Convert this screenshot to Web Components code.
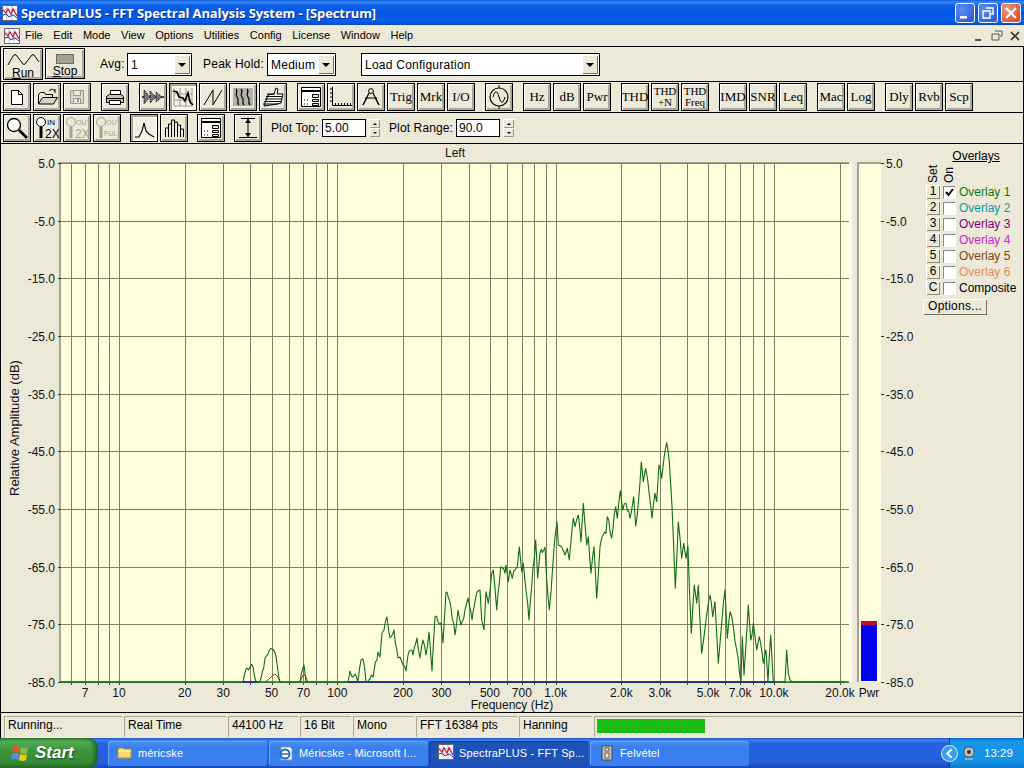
<!DOCTYPE html>
<html>
<head>
<meta charset="utf-8">
<title>SpectraPLUS</title>
<style>
    html, body { margin: 0; padding: 0; }
    body {
        width: 1024px;
        height: 768px;
        overflow: hidden;
        display: flex;
        flex-direction: column;
        background: #ece9d8;
        font: 12px "Liberation Sans", Arial, sans-serif;
        color: #000;
    }
    svg { display: block; }
    .work { display: flex; height: 568px; box-shadow: inset 1px 0 #000, inset -1px 0 #000; }
</style>
</head>
<body>
<title-bar></title-bar>
<menu-bar></menu-bar>
<run-row></run-row>

<tool-row>
    <tool-group>
        <tool-button><svg width="20" height="20" viewBox="0 0 20 20"><path d="M4.500 3.500h7l4 4v10h-11z" fill="#fff" stroke="#000"/><path d="M11.500 3.500v4h4" fill="none" stroke="#000"/></svg></tool-button>
        <tool-button><svg width="24" height="20" viewBox="0 0 24 20"><path d="M3.500 17V7.500l2-2h4l1 2h7v3" fill="#ece9d8" stroke="#000"/><path d="M3.500 17l4-6.500h15l-4 6.500z" fill="#d8d4c0" stroke="#000"/><path d="M14 4l3-2 3 2M20 2v4" fill="none" stroke="#000"/></svg></tool-button>
        <tool-button off><svg width="20" height="20" viewBox="0 0 20 20"><path d="M3.500 3.500h13v13h-13z" fill="#dcd9c8" stroke="#9c9a8c"/><path d="M6.500 3.500h7v5h-7zM6.500 11.500h7v5h-7z" fill="#ece9d8" stroke="#9c9a8c"/><path d="M10 12h2v3h-2z" fill="#9c9a8c"/></svg></tool-button>
    </tool-group>
    <tool-group>
        <tool-button><svg width="22" height="20" viewBox="0 0 22 20"><path d="M6.500 8V3.500h10V8" fill="#fff" stroke="#000"/><path d="M2.500 9.500l3-2h12l2 2v6h-17z" fill="#c8c5b4" stroke="#000"/><path d="M5.500 13.500h11v4h-11z" fill="#fff" stroke="#000"/><path d="M3 11.500h16" stroke="#000"/></svg></tool-button>
    </tool-group>
    <tool-group>
        <tool-button><svg width="24" height="20" viewBox="0 0 24 20"><path d="M1 10h22" stroke="#000" stroke-width="1.400"/><path d="M3 3l6 7-6 7zM9 4l6 6-6 6zM15 5l6 5-6 5z" fill="#777" stroke="#000" stroke-dasharray="1 1"/></svg></tool-button>
        <tool-button on><svg width="24" height="22" viewBox="0 0 24 22"><path d="M3 2v18h18V2M3 8h18M3 14h18M9 2v18M15 2v18" fill="none" stroke="#999"/><path d="M2 5l4 1 2 5 4 1 2 3 3-8 2 9 3 3" fill="none" stroke="#000" stroke-width="1.700"/></svg></tool-button>
        <tool-button><svg width="24" height="22" viewBox="0 0 24 22"><path d="M3 19L12 4v15L21 4" fill="none" stroke="#000"/></svg></tool-button>
        <tool-button shade><svg width="24" height="22" viewBox="0 0 24 22"><rect x="2" y="2" width="20" height="18" fill="#999" opacity=".7"/><path d="M5 3c3 3-2 5 1 8s-1 5 2 8M10 3c3 3-2 5 1 8s-1 5 2 8M16 3c3 3-2 5 1 8s-1 5 2 8" fill="none" stroke="#000" stroke-width="1.200"/></svg></tool-button>
        <tool-button><svg width="24" height="22" viewBox="0 0 24 22"><path d="M3 20l4-11 6-1 2-6 2 1-1 5h6l-2 9-4 1z" fill="#fff" stroke="#000"/><path d="M2 18h15M3 15.500h17M4 13h17M5 10.500h16M6 8h8" stroke="#000"/></svg></tool-button>
    </tool-group>
    <tool-group>
        <tool-button><svg width="24" height="22" viewBox="0 0 24 22"><path d="M2.500 1.500h19v19h-19z" fill="#fff" stroke="#000"/><path d="M2 5h20" stroke="#000" stroke-width="2"/><path d="M13.500 8.500h6v3h-6zM13.500 13.500h6v2h-6zM13.500 17.500h6v2h-6z" fill="#ece9d8" stroke="#000"/><path d="M5 14h1M8 14h1M5 18h1M8 18h1" stroke="#000"/></svg></tool-button>
        <tool-button><svg width="24" height="22" viewBox="0 0 24 22"><path d="M3.500 1v18.500H23" fill="none" stroke="#000"/><path d="M3 3H1M3 7H1M3 11H1M3 15H1M6.500 19v-2M9.500 19v-2M12.500 19v-2M15.500 19v-2M18.500 19v-2M21.500 19v-2" stroke="#000" fill="none"/></svg></tool-button>
        <tool-button><svg width="24" height="22" viewBox="0 0 24 22"><circle cx="12" cy="5" r="2.400" fill="none" stroke="#000"/><path d="M10 7L4 19M14 7l6 12M6 12h12" fill="none" stroke="#000" stroke-width="1.200"/><path d="M4 19c2-4 3-5 4-7M20 19c-2-4-3-5-4-7" fill="none" stroke="#000"/></svg></tool-button>
        <tool-button>Trig</tool-button>
        <tool-button>Mrk</tool-button>
        <tool-button>I/O</tool-button>
    </tool-group>
    <tool-group>
        <tool-button><svg width="24" height="26" viewBox="0 0 24 26"><circle cx="12" cy="13" r="9" fill="none" stroke="#000" stroke-width="1.200"/><path d="M6 13c2-7 4-7 6 0s4 7 6 0M12 1v3M12 22v3" fill="none" stroke="#000"/></svg></tool-button>
    </tool-group>
    <tool-group>
        <tool-button>Hz</tool-button>
        <tool-button>dB</tool-button>
        <tool-button>Pwr</tool-button>
    </tool-group>
    <tool-group>
        <tool-button>THD</tool-button>
        <tool-button small><span>THD<br>+N</span></tool-button>
        <tool-button small><span>THD<br>Freq</span></tool-button>
    </tool-group>
    <tool-group>
        <tool-button>IMD</tool-button>
        <tool-button>SNR</tool-button>
        <tool-button>Leq</tool-button>
    </tool-group>
    <tool-group>
        <tool-button>Mac</tool-button>
        <tool-button>Log</tool-button>
    </tool-group>
    <tool-group>
        <tool-button>Dly</tool-button>
        <tool-button>Rvb</tool-button>
        <tool-button>Scp</tool-button>
    </tool-group>
</tool-row>

<tool-row last gap="9">
    <tool-group>
        <tool-button><svg width="24" height="24" viewBox="0 0 24 24"><circle cx="9" cy="9" r="6.500" fill="#fff" stroke="#000" stroke-width="1.300"/><path d="M14 14l8 8" stroke="#000" stroke-width="2.600"/></svg></tool-button>
        <tool-button><svg width="26" height="24" viewBox="0 0 26 24"><circle cx="7" cy="6" r="4.500" fill="#fff" stroke="#000"/><path d="M7 11v11" stroke="#000" stroke-width="3"/><text x="13" y="9" font-size="8" font-family="Liberation Sans">IN</text><text x="11" y="22" font-size="12" font-family="Liberation Sans">2X</text></svg></tool-button>
        <tool-button off><svg width="26" height="24" viewBox="0 0 26 24" fill="#a5a295"><circle cx="7" cy="6" r="4.500" fill="none" stroke="#a5a295"/><path d="M7 11v11" stroke="#a5a295" stroke-width="3"/><text x="12" y="9" font-size="7" font-family="Liberation Sans">OUT</text><text x="11" y="22" font-size="12" font-family="Liberation Sans">2X</text></svg></tool-button>
        <tool-button off><svg width="26" height="24" viewBox="0 0 26 24" fill="#a5a295"><circle cx="7" cy="6" r="4.500" fill="none" stroke="#a5a295"/><path d="M7 11v11" stroke="#a5a295" stroke-width="3"/><text x="12" y="9" font-size="7" font-family="Liberation Sans">OUT</text><text x="10" y="20" font-size="7" font-family="Liberation Sans">FULL</text></svg></tool-button>
    </tool-group>
    <tool-group>
        <tool-button on plain><svg width="24" height="22" viewBox="0 0 24 22"><path d="M3 20h4l3-6 2-8 2 8 3 3 5 3" fill="none" stroke="#000" stroke-width="1.100"/></svg></tool-button>
        <tool-button><svg width="24" height="22" viewBox="0 0 24 22"><path d="M3.500 20v-9h3v9M6.500 20V7h3v13M9.500 20V3h3v17M12.500 20V5h3v15M15.500 20V8h3v12M18.500 20v-8h3v8" fill="none" stroke="#000"/></svg></tool-button>
    </tool-group>
    <tool-group>
        <tool-button><svg width="24" height="22" viewBox="0 0 24 22"><path d="M2.500 1.500h19v19h-19z" fill="#fff" stroke="#000"/><path d="M2 5h20" stroke="#000" stroke-width="2"/><path d="M13.500 8.500h6v3h-6zM13.500 13.500h6v2h-6zM13.500 17.500h6v2h-6z" fill="#ece9d8" stroke="#000"/><path d="M5 14h1M8 14h1M5 18h1M8 18h1" stroke="#000"/></svg></tool-button>
    </tool-group>
    <tool-group>
        <tool-button><svg width="24" height="24" viewBox="0 0 24 24"><path d="M5 2.500h14M3 21.500h18M12 3v18" stroke="#000" fill="none"/><path d="M9 7l3-4 3 4zM9 17l3 4 3-4z" fill="#000"/></svg></tool-button>
    </tool-group>
    <spin-field label="Plot Top:" value="5.00" width="51"></spin-field>
    <spin-field label="Plot Range:" value="90.0" width="67"></spin-field>
</tool-row>

<div class="work">
    <spectrum-plot></spectrum-plot>
    <overlay-panel></overlay-panel>
</div>

<status-bar></status-bar>
<task-bar></task-bar>

<script>
const appIcon = size => `
    <svg width="${size}" height="${size}" viewBox="0 0 16 16">
        <rect x=".5" y=".5" width="15" height="15" fill="#fff" stroke="#667"/>
        <path d="M1 5h14M1 10h14M5 1v14M10 1v14" stroke="#99b" stroke-width=".6"/>
        <path d="M1 5l3 3 2-4 3 5 2-5 4 7" fill="none" stroke="#c01830" stroke-width="1.200"/>
        <path d="M1 10l3-1 3 3 4-2 4 3" fill="none" stroke="#2040c0"/>
    </svg>`;

class TitleBar extends HTMLElement {
    constructor() {
        super();
        const shadow = this.attachShadow({ mode: 'open' });
        shadow.innerHTML = `
            <style>
                :host {
                    display: flex;
                    align-items: center;
                    height: 25px;
                    flex: none;
                    padding: 0 3px 0 2px;
                    box-sizing: border-box;
                    background: linear-gradient(#0a5be0 0, #3a8cf5 2px, #0f62e6 5px, #0555e3 13px, #0660ea 21px, #0a48c4 25px);
                    color: #fff;
                    font: bold 13px "Open Sans", "Liberation Sans", sans-serif;
                    letter-spacing: -0.1px;
                }
                .text { margin-left: 3px; flex: 1; text-shadow: 1px 1px #0a2f90; white-space: nowrap; }
                .btns { display: flex; gap: 3px; }
                .btn {
                    width: 20px;
                    height: 20px;
                    box-sizing: border-box;
                    border: 1px solid #fff;
                    border-radius: 3px;
                    background: radial-gradient(circle at 30% 30%, #5d8df0, #2457d4);
                }
                .btn.close { background: radial-gradient(circle at 30% 30%, #ee9a80, #d0401a); }
                .btn svg { width: 18px; height: 18px; }
            </style>
            ${appIcon(16)}
            <div class="text">SpectraPLUS - FFT Spectral Analysis System - [Spectrum]</div>
            <div class="btns">
                <div class="btn"><svg viewBox="0 0 18 18"><path d="M4 12h7v2.500H4z" fill="#fff"/></svg></div>
                <div class="btn"><svg viewBox="0 0 18 18"><path d="M7 4h7v6h-2M4 7h7v7H4z" fill="none" stroke="#fff" stroke-width="1.400"/></svg></div>
                <div class="btn close"><svg viewBox="0 0 18 18"><path d="M4 4l10 10M14 4L4 14" stroke="#fff" stroke-width="2.200"/></svg></div>
            </div>
        `;
    }
}

class MenuBar extends HTMLElement {
    constructor() {
        super();
        const shadow = this.attachShadow({ mode: 'open' });
        const items = ['File', 'Edit', 'Mode', 'View', 'Options', 'Utilities', 'Config', 'License', 'Window', 'Help'];
        shadow.innerHTML = `
            <style>
                :host {
                    display: flex;
                    align-items: center;
                    height: 21px;
                    flex: none;
                    box-sizing: border-box;
                    padding-left: 4px;
                    background: #ece9d8;
                    font: 11px "Liberation Sans", sans-serif;
                }
                .items { display: flex; gap: 10.600px; margin-left: 5px; flex: 1; margin-top: -1px; }
                .ctl { display: flex; gap: 2px; margin-right: 1px; }
                .ctl svg { width: 16px; height: 16px; }
            </style>
            ${appIcon(16)}
            <div class="items">${items.map(i => `<span>${i}</span>`).join('')}</div>
            <div class="ctl">
                <svg viewBox="0 0 16 16"><path d="M4 11h6v2H4z" fill="#555"/></svg>
                <svg viewBox="0 0 16 16"><path d="M6 3h7v5h-2M3 6h7v6H3z" fill="none" stroke="#555"/></svg>
                <svg viewBox="0 0 16 16"><path d="M4 4l8 8M12 4l-8 8" stroke="#444" stroke-width="1.800"/></svg>
            </div>
        `;
    }
}

class ToolButton extends HTMLElement {
    constructor() {
        super();
        const shadow = this.attachShadow({ mode: 'open' });
        shadow.innerHTML = `
            <style>
                :host {
                    display: flex;
                    align-items: center;
                    justify-content: center;
                    width: 28px;
                    height: 28px;
                    flex: none;
                    box-sizing: border-box;
                    border: 1px solid #000;
                    background: #ece9d8;
                    box-shadow: inset 1px 1px #fff, inset -2px -2px #aca899;
                    font: 13px "Liberation Serif", serif;
                    text-align: center;
                    overflow: hidden;
                }
                :host([small]) { font-size: 11px; line-height: 11px; }
                :host([off]) { color: #a5a295; }
                :host([on]) {
                    background: repeating-conic-gradient(#fff 0 25%, #ece9d8 0 50%) 0 0 / 2px 2px;
                    box-shadow: inset 2px 2px #aca899, inset -1px -1px #fff;
                }
                :host([plain]) { background: #f2f0e4; }
            </style>
            <slot></slot>
        `;
    }
}

class ToolGroup extends HTMLElement {
    constructor() {
        super();
        const shadow = this.attachShadow({ mode: 'open' });
        shadow.innerHTML = `
            <style>:host { display: flex; gap: 2px; }</style>
            <slot></slot>
        `;
    }
}

class ToolRow extends HTMLElement {
    constructor() {
        super();
        const shadow = this.attachShadow({ mode: 'open' });
        const gap = this.getAttribute('gap') || 10;
        const bottom = this.hasAttribute('last') ? '1px solid #000' : '0';
        const h = this.hasAttribute('last') ? 32 : 31;
        shadow.innerHTML = `
            <style>
                :host {
                    display: flex;
                    align-items: flex-start;
                    gap: ${gap}px;
                    height: ${h}px;
                    flex: none;
                    box-sizing: border-box;
                    border-top: 1px solid #000;
                    border-bottom: ${bottom};
                    border-left: 1px solid #000;
                    border-right: 1px solid #000;
                    padding: 1px 2px 0;
                    background: #ece9d8;
                }
            </style>
            <slot></slot>
        `;
    }
}

class DropList extends HTMLElement {
    constructor() {
        super();
        const shadow = this.attachShadow({ mode: 'open' });
        shadow.innerHTML = `
            <style>
                :host {
                    display: flex;
                    align-items: center;
                    justify-content: space-between;
                    height: 23px;
                    box-sizing: border-box;
                    border: 1px solid #000;
                    background: #fff;
                    padding-left: 3px;
                    font: 12px "Liberation Sans", sans-serif;
                    letter-spacing: 0.02em;
                }
                .arrow {
                    width: 16px;
                    height: 19px;
                    margin-right: 1px;
                    display: flex;
                    align-items: center;
                    justify-content: center;
                    background: #ece9d8;
                    box-shadow: inset 1px 1px #fff, inset -1px -1px #716f64;
                }
                .arrow i {
                    border: 4px solid transparent;
                    border-top: 4px solid #000;
                    border-bottom: 0;
                    width: 0;
                }
            </style>
            <span>${this.getAttribute('text')}</span>
            <div class="arrow"><i></i></div>
        `;
    }
}

class RunRow extends HTMLElement {
    constructor() {
        super();
        const shadow = this.attachShadow({ mode: 'open' });
        shadow.innerHTML = `
            <style>
                :host {
                    display: flex;
                    align-items: flex-start;
                    height: 35px;
                    flex: none;
                    box-sizing: border-box;
                    border: 1px solid #000;
                    border-bottom: 0;
                    padding: 1px 2px 0;
                    background: #ece9d8;
                    font: 12px "Liberation Sans", sans-serif;
                }
                .big {
                    width: 40px;
                    height: 32px;
                    margin-right: 2px;
                    box-sizing: border-box;
                    border: 1px solid #000;
                    box-shadow: inset 1px 1px #fff, inset -2px -2px #aca899;
                    display: flex;
                    flex-direction: column;
                    align-items: center;
                    line-height: 12px;
                }
                .big.run { padding-top: 4px; }
                .big.stop { height: 31px; padding-top: 5px; }
                .block { width: 18px; height: 10px; background: #a3a195; border: 1px solid #6c6b62; box-sizing: border-box; margin-bottom: 1px; }
                .lbl { margin-top: 9px; letter-spacing: 0.02em; white-space: nowrap; }
                .avg-l { margin-left: 13px; width: 27px; }
                .peak-l { width: 64px; }
                .avg { width: 65px; margin: 5px 11px 0 0; }
                .peak { width: 69px; margin: 5px 25px 0 0; }
                .load { width: 239px; margin-top: 5px; }
            </style>
            <div class="big run">
                <svg width="34" height="14" viewBox="0 0 34 14"><path d="M2 12Q5 6 8 2Q9 1 10 2L17 11Q18 12 19 11L26 2Q27 1 28 2L33 9" fill="none" stroke="#000"/></svg>
                <span><u>R</u>un</span>
            </div>
            <div class="big stop">
                <div class="block"></div>
                <span><u>S</u>top</span>
            </div>
            <span class="lbl avg-l">Avg:</span>
            <drop-list class="avg" text="1"></drop-list>
            <span class="lbl peak-l">Peak Hold:</span>
            <drop-list class="peak" text="Medium"></drop-list>
            <drop-list class="load" text="Load Configuration"></drop-list>
        `;
    }
}

class SpinField extends HTMLElement {
    constructor() {
        super();
        const shadow = this.attachShadow({ mode: 'open' });
        shadow.innerHTML = `
            <style>
                :host {
                    display: flex;
                    align-items: center;
                    height: 28px;
                    font: 12px "Liberation Sans", sans-serif;
                    letter-spacing: 0.01em;
                }
                .name { width: ${this.getAttribute('width')}px; white-space: nowrap; }
                .box {
                    width: 44px;
                    height: 18px;
                    box-sizing: border-box;
                    border: 1px solid #000;
                    background: #fff;
                    padding-left: 2px;
                    line-height: 16px;
                }
                .spin { display: flex; flex-direction: column; width: 11px; height: 18px; margin-left: 3px; }
                .spin div {
                    flex: 1;
                    display: flex;
                    align-items: center;
                    justify-content: center;
                    box-shadow: inset 1px 1px #fff, inset -1px -1px #9a9888;
                }
                .up { border: 2px solid transparent; border-bottom: 2px solid #000; border-top: 0; }
                .down { border: 2px solid transparent; border-top: 2px solid #000; border-bottom: 0; }
            </style>
            <span class="name">${this.getAttribute('label')}</span>
            <div class="box">${this.getAttribute('value')}</div>
            <div class="spin"><div><i class="up"></i></div><div><i class="down"></i></div></div>
        `;
    }
}

const xOf = f => 119 + 218.3 * Math.log10(f / 10);
const yLevels = [5, -5, -15, -25, -35, -45, -55, -65, -75, -85];
const yOf = db => 163 + (5 - db) * 5.766;

// low end of the trace, read off the reference in page pixels
const lowPts = [[60,682],[243,682],[247,668],[250,667],[253,667],[256,682],[260,682],[265,658],[272,649],[275,653],[280,682],
    [300,682],[304,665],[306,682],[348,682],[350,671],[353,677],[355,674],[358,682],[361,660],[363,659],[366,682],[370,679],[373,677],
    [378,652],[380,657],[382,633],[384,630],[387,617],[390,638],[394,630],[398,658],[400,657],[403,665],[406,671],[408,655],[412,650],
    [413,655],[417,638],[420,658],[423,640],[426,655],[429,632],[432,671],[435,617],[438,622],[441,623],[443,643],[446,592],[451,608],
    [455,635],[458,610],[461,625],[465,610],[468,598],[472,620],[477,592],[480,590]];

// zoomed crop coordinates of the main hump, x = 480 + zx/3, y = 430 + zy/3
const humpZoom = [[5,570],[12,600],[18,485],[25,520],[35,430],[40,420],[50,540],[62,410],[75,430],[78,405],[85,455],[90,420],[97,445],
    [105,420],[112,410],[118,350],[125,425],[130,400],[147,570],[155,470],[167,330],[173,445],[180,370],[195,352],[200,450],[208,540],
    [218,410],[224,330],[231,275],[235,345],[245,350],[255,375],[262,355],[268,390],[280,265],[285,290],[295,255],[303,335],[310,220],
    [320,345],[325,320],[333,430],[342,350],[350,505],[360,350],[366,320],[378,310],[382,260],[395,325],[407,230],[412,265],[421,182],
    [428,240],[438,220],[450,265],[461,200],[467,288],[472,255],[484,95],[490,155],[497,115],[503,150],[516,265],[525,190],[530,215],
    [537,105],[545,145],[552,85],[560,38],[568,95],[576,230],[581,350],[586,475],[595,275],[605,385],[611,340],[618,385],[624,350],
    [628,470],[634,610],[643,465],[650,520],[655,465],[665,670],[672,620],[678,570],[690,495],[698,560],[705,515],[715,700],[725,580],
    [735,480],[742,625],[750,545],[760,590],[770,660],[783,755],[787,620],[792,735],[805,525],[812,630],[820,580],[830,660],[838,620],
    [850,700],[858,660],[864,755],[872,615],[880,755],[915,755],[920,660],[925,730],[935,755],[1095,755]];

function tracePoints() {
    const pts = lowPts.concat(humpZoom.map(p => [480 + p[0] / 3, 430 + p[1] / 3]));
    const out = [];
    let seed = 7;
    pts.forEach((p, i) => {
        out.push(p);
        const next = pts[i + 1];
        if (!next || p[1] >= 681 && next[1] >= 681) return;
        // a little jitter between the read points, the real curve is noisier
        const n = Math.floor((next[0] - p[0]) / 1.2);
        for (let k = 1; k < n; k++) {
            seed = (seed * 31 + 11) % 101;
            const t = k / n;
            const y = p[1] + (next[1] - p[1]) * t + (seed / 101 - 0.5) * 7;
            out.push([p[0] + (next[0] - p[0]) * t, Math.min(y, 682)]);
        }
    });
    return out.map(p => p[0].toFixed(1) + ',' + p[1].toFixed(1)).join(' ');
}

class SpectrumPlot extends HTMLElement {
    constructor() {
        super();
        const shadow = this.attachShadow({ mode: 'open' });
        const freqs = [6, 7, 8, 9];
        [10, 100, 1000, 10000].forEach(d => {
            for (let m = 1; m < 10; m++) freqs.push(d * m);
        });
        const vis = freqs.filter(f => f <= 20000);
        const labels = [[7,'7'],[10,'10'],[20,'20'],[30,'30'],[50,'50'],[70,'70'],[100,'100'],[200,'200'],[300,'300'],[500,'500'],
            [700,'700'],[1000,'1.0k'],[2000,'2.0k'],[3000,'3.0k'],[5000,'5.0k'],[7000,'7.0k'],[10000,'10.0k']];
        const vlines = vis.map(f => {
            const x = Math.round(xOf(f)) + 0.5;
            return `<path d="M${x} 164V682" stroke="#7f7f6a"/><path d="M${x} 682v3" stroke="#444"/>`;
        }).join('');
        const hlines = yLevels.map(v => {
            const y = Math.round(yOf(v)) + 0.5;
            const t = v.toFixed(1);
            return `<path d="M60 ${y}H849" stroke="#7f7f6a"/>
                <path d="M58 ${y}h3M881 ${y}h3" stroke="#333"/>
                <text x="55" y="${y + 4}" text-anchor="end">${t}</text>
                <text x="886" y="${y + 4}">${t}</text>`;
        }).join('');
        const ticks = labels.map(l => `<text x="${xOf(l[0]).toFixed(1)}" y="697" text-anchor="middle">${l[1]}</text>`).join('');
        shadow.innerHTML = `
            <style>
                :host { display: block; width: 922px; height: 568px; flex: none; }
                svg { display: block; }
                text { font: 12px "Liberation Sans", sans-serif; fill: #111; }
            </style>
            <svg width="922" height="568" viewBox="0 144 922 568">
                <rect x="60" y="163" width="789" height="519" fill="#ffffdc"/>
                <rect x="849" y="163" width="3" height="519" fill="#fdfdf5"/>
                <path d="M60 682V163H849" fill="none" stroke="#a5a28e" stroke-width="2"/>
                ${vlines}
                ${hlines}
                <path d="M60 682H849" stroke="#1a7a1a" stroke-width="1.500"/>
                <path d="M348 682H775M243 682H258" stroke="#1c1c9c" stroke-width="1.500"/>
                <polyline points="265,682 268,680 272,676 275,674 278,677 280,682" fill="none" stroke="#b03020"/>
                <polyline points="300,682 303,675 305,675 308,682" fill="none" stroke="#b03020"/>
                <polyline points="${tracePoints()}" fill="none" stroke="#0f6e14" stroke-width="1.100" stroke-linejoin="round"/>
                <rect x="859" y="163" width="22" height="519" fill="#ffffe0"/>
                <path d="M858 682V163H881" fill="none" stroke="#a5a28e" stroke-width="2"/>
                <rect x="861" y="625" width="16" height="56" fill="#0000f0"/>
                <rect x="861" y="621" width="16" height="4" fill="#c0102a"/>
                ${ticks}
                <text x="840" y="697" text-anchor="middle">20.0k</text>
                <text x="869" y="697" text-anchor="middle">Pwr</text>
                <text x="455" y="157" text-anchor="middle">Left</text>
                <text x="512" y="709" text-anchor="middle">Frequency (Hz)</text>
                <text transform="translate(19 428) rotate(-90)" text-anchor="middle" style="font-size:13px">Relative Amplitude (dB)</text>
            </svg>
        `;
    }
}

class OverlayRow extends HTMLElement {
    constructor() {
        super();
        const shadow = this.attachShadow({ mode: 'open' });
        const tick = this.hasAttribute('checked')
            ? '<svg width="11" height="11" viewBox="0 0 11 11" style="display:block"><path d="M2 5l2.500 3L9 2" fill="none" stroke="#000" stroke-width="2"/></svg>' : '';
        shadow.innerHTML = `
            <style>
                :host { display: flex; align-items: center; height: 16px; }
                .num {
                    width: 14px;
                    height: 14px;
                    box-sizing: border-box;
                    text-align: center;
                    line-height: 13px;
                    box-shadow: inset 1px 1px #fff, inset -1px -1px #8a8878;
                    font-size: 12px;
                }
                .box {
                    width: 13px;
                    height: 13px;
                    margin: 0 3px 0 3px;
                    box-sizing: border-box;
                    background: #fff;
                    border: 1px solid;
                    border-color: #8a8878 #fff #fff #8a8878;
                }
                .name { color: ${this.getAttribute('color')}; white-space: nowrap; }
            </style>
            <div class="num">${this.getAttribute('set')}</div>
            <div class="box">${tick}</div>
            <span class="name"><slot></slot></span>
        `;
    }
}

class OverlayPanel extends HTMLElement {
    constructor() {
        super();
        const shadow = this.attachShadow({ mode: 'open' });
        shadow.innerHTML = `
            <style>
                :host {
                    display: block;
                    width: 102px;
                    flex: none;
                    box-sizing: border-box;
                    padding: 6px 0 0 4px;
                    font: 12px "Liberation Sans", sans-serif;
                }
                .title { text-decoration: underline; text-align: center; margin-left: 15px; width: 70px; line-height: 13px; }
                .heads { display: flex; height: 21px; align-items: flex-end; margin-top: -1px; margin-bottom: 1px; }
                .heads span {
                    writing-mode: vertical-rl;
                    transform: rotate(180deg);
                    width: 14px;
                    line-height: 14px;
                }
                .heads span + span { margin-left: 2px; }
                .opts {
                    width: 64px;
                    height: 16px;
                    margin: 3px 0 0 -3px;
                    box-sizing: border-box;
                    text-align: center;
                    line-height: 15px;
                    box-shadow: inset 1px 1px #fff, inset -1px -1px #716f64;
                    letter-spacing: 0.02em;
                }
            </style>
            <div class="title">Overlays</div>
            <div class="heads"><span>Set</span><span>On</span></div>
            <overlay-row set="1" checked color="#0a7a0a">Overlay 1</overlay-row>
            <overlay-row set="2" color="#0a9a9a">Overlay 2</overlay-row>
            <overlay-row set="3" color="#800080">Overlay 3</overlay-row>
            <overlay-row set="4" color="#d020d0">Overlay 4</overlay-row>
            <overlay-row set="5" color="#804010">Overlay 5</overlay-row>
            <overlay-row set="6" color="#e88a58">Overlay 6</overlay-row>
            <overlay-row set="C" color="#000">Composite</overlay-row>
            <div class="opts">Options...</div>
        `;
    }
}

class StatusBar extends HTMLElement {
    constructor() {
        super();
        const shadow = this.attachShadow({ mode: 'open' });
        const cells = [['Running...', 118], ['Real Time', 102], ['44100 Hz', 70], ['16 Bit', 51], ['Mono', 61], ['FFT 16384 pts', 101], ['Hanning', 73]];
        shadow.innerHTML = `
            <style>
                :host {
                    display: flex;
                    gap: 2px;
                    height: 26px;
                    flex: none;
                    box-sizing: border-box;
                    border: 1px solid #000;
                    border-bottom: 0;
                    padding: 3px 1px 1px 3px;
                    background: #ece9d8;
                    font: 12px "Liberation Sans", sans-serif;
                }
                .cell {
                    box-sizing: border-box;
                    border-top: 1px solid #aca899;
                    border-left: 1px solid #aca899;
                    padding: 1px 0 0 3px;
                    white-space: nowrap;
                }
                .meter { flex: 1; padding: 2px 0 0 2px; }
                .bar {
                    width: 108px;
                    height: 14px;
                    background: repeating-linear-gradient(90deg, #12c412 0 2px, #2fae1a 2px 3px);
                }
            </style>
            ${cells.map(c => `<div class="cell" style="width:${c[1]}px">${c[0]}</div>`).join('')}
            <div class="cell meter"><div class="bar"></div></div>
        `;
    }
}

class TaskButton extends HTMLElement {
    constructor() {
        super();
        const shadow = this.attachShadow({ mode: 'open' });
        shadow.innerHTML = `
            <style>
                :host {
                    display: flex;
                    align-items: center;
                    gap: 5px;
                    width: 159px;
                    height: 25px;
                    box-sizing: border-box;
                    padding-left: 9px;
                    border-radius: 3px;
                    background: linear-gradient(#4a8ef5, #3a7eec 30%, #3c81f3);
                    box-shadow: inset 1px 1px #6aa4f8;
                    color: #fff;
                    white-space: nowrap;
                    font-size: 11px;
                    letter-spacing: 0.15px;
                }
                :host([active]) {
                    margin: 0 0 0 -1px;
                    background: #1e52b7;
                    box-shadow: inset 1px 1px 2px #0f3a8a;
                }
            </style>
            <slot name="icon"></slot>
            <span>${this.getAttribute('text')}</span>
        `;
    }
}

class TaskBar extends HTMLElement {
    constructor() {
        super();
        const shadow = this.attachShadow({ mode: 'open' });
        shadow.innerHTML = `
            <style>
                :host {
                    display: flex;
                    align-items: center;
                    height: 30px;
                    flex: none;
                    background: linear-gradient(#1f4fc0 0, #3a83ee 2px, #2663e0 5px, #245edb 24px, #1a48b8 30px);
                    color: #fff;
                    font: 12px "Liberation Sans", sans-serif;
                }
                .start {
                    display: flex;
                    align-items: center;
                    gap: 5px;
                    width: 98px;
                    height: 30px;
                    box-sizing: border-box;
                    padding-left: 11px;
                    border-radius: 0 10px 10px 0;
                    background: linear-gradient(#3a8a3a 0, #55ae55 12%, #3d953d 40%, #378c37 80%, #2a6f2a 100%);
                    box-shadow: inset -3px 0 4px #1f5f1f;
                    font: italic bold 17px "Liberation Sans", sans-serif;
                    text-shadow: 1px 1px 2px #1a4a1a;
                }
                .tasks { display: flex; gap: 2px; margin-left: 10px; flex: 1; }
                .tray {
                    display: flex;
                    align-items: center;
                    width: 75px;
                    height: 30px;
                    box-sizing: border-box;
                    background: linear-gradient(#0c66c8 0, #1796ea 3px, #1290e4 24px, #0d78cc 30px);
                    border-left: 1px solid #0a3f9a;
                    font-size: 11.500px;
                }
                .tray svg { flex: none; }
                .arrow { margin-left: -9px; }
                .cam { margin-left: 3px; }
                .clock { margin-left: 7px; }
            </style>
            <div class="start">
                <svg width="19" height="19" viewBox="0 0 19 19">
                    <path d="M2 3q3-2 7 0l-1 6q-4-2-7 0z" fill="#e8542a"/>
                    <path d="M10 3q4 2 7 0l-1 6q-3 2-7 0z" fill="#7cc142"/>
                    <path d="M1 10q3-2 7 0l-1 6q-4-2-7 0z" fill="#4a90e8"/>
                    <path d="M9 10q3 2 7 0l-1 6q-3 2-7 0z" fill="#f6c520"/>
                </svg>
                <span>Start</span>
            </div>
            <div class="tasks">
                <task-button text="méricske">
                    <svg slot="icon" width="16" height="16" viewBox="0 0 16 16"><path d="M1 13V4l1-1h4l1 1h7v9z" fill="#f5d870" stroke="#b8902c"/><path d="M1 6h13" stroke="#fff3b8"/></svg>
                </task-button>
                <task-button text="Méricske - Microsoft I...">
                    <svg slot="icon" width="16" height="16" viewBox="0 0 16 16"><path d="M3 2h9l2 2v11H3z" fill="#fff" stroke="#8899aa"/><circle cx="7" cy="9" r="4.500" fill="none" stroke="#1f6fd0" stroke-width="2"/><path d="M3 9h8" stroke="#1f6fd0" stroke-width="1.500"/></svg>
                </task-button>
                <task-button active text="SpectraPLUS - FFT Sp...">
                    <span slot="icon">${appIcon(16)}</span>
                </task-button>
                <task-button text="Felvétel">
                    <svg slot="icon" width="16" height="16" viewBox="0 0 16 16"><path d="M3 1h10v14H3z" fill="#c9c6b8" stroke="#444"/><path d="M6 3h4v3H6zM6 8h4v5H6z" fill="#f0eee2" stroke="#555"/></svg>
                </task-button>
            </div>
            <div class="tray">
                <svg class="arrow" width="17" height="17" viewBox="0 0 16 16"><circle cx="8" cy="8" r="7.500" fill="#3a9cf0" stroke="#cfe6fb"/><path d="M10 4L6 8l4 4" fill="none" stroke="#fff" stroke-width="2"/></svg>
                <svg class="cam" width="16" height="16" viewBox="0 0 16 16"><circle cx="8" cy="7" r="5" fill="#c6c6c0" stroke="#555"/><circle cx="8" cy="7" r="2" fill="#333"/><path d="M4 14h8" stroke="#cde"/></svg>
                <span class="clock">13:29</span>
            </div>
        `;
    }
}

customElements.define('title-bar', TitleBar);
customElements.define('menu-bar', MenuBar);
customElements.define('tool-button', ToolButton);
customElements.define('tool-group', ToolGroup);
customElements.define('tool-row', ToolRow);
customElements.define('drop-list', DropList);
customElements.define('run-row', RunRow);
customElements.define('spin-field', SpinField);
customElements.define('spectrum-plot', SpectrumPlot);
customElements.define('overlay-row', OverlayRow);
customElements.define('overlay-panel', OverlayPanel);
customElements.define('status-bar', StatusBar);
customElements.define('task-button', TaskButton);
customElements.define('task-bar', TaskBar);
</script>
</body>
</html>
